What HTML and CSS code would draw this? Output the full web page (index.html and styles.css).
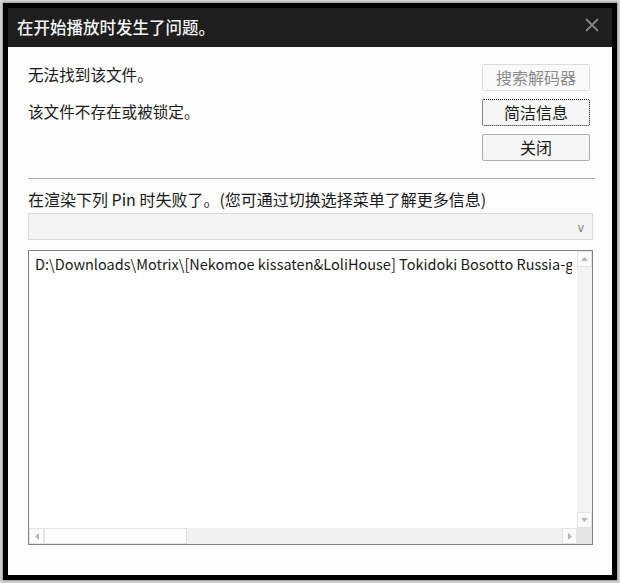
FILE: index.html
```html
<!DOCTYPE html>
<html lang="zh-CN">
<head>
<meta charset="utf-8">
<title>在开始播放时发生了问题。</title>
<link rel="stylesheet" href="styles.css">
</head>
<body>
<div class="window">
  <div class="titlebar">
    <span class="title">在开始播放时发生了问题。</span>
    <svg class="close" width="14" height="14" viewBox="0 0 14 14"><path d="M1 1L13 13M13 1L1 13" stroke="#858585" stroke-width="1.8" fill="none"/></svg>
  </div>
  <div class="content">
    <div class="top">
      <div class="messages">
        <p class="msg">无法找到该文件。</p>
        <p class="msg msg2">该文件不存在或被锁定。</p>
      </div>
      <div class="buttons">
        <div class="btn disabled">搜索解码器</div>
        <div class="btn focused">简洁信息</div>
        <div class="btn">关闭</div>
      </div>
    </div>
    <div class="sep"></div>
    <p class="label">在渲染下列 Pin 时失败了。(您可通过切换选择菜单了解更多信息)</p>
    <div class="combo"><span class="arrow">v</span></div>
    <div class="textbox">
      <div class="textarea">D:\Downloads\Motrix\[Nekomoe kissaten&amp;LoliHouse] Tokidoki Bosotto Russia-go de Dereru Tonari no Alya-san</div>
      <div class="vscroll">
        <div class="sbtn up"><svg width="7" height="4" viewBox="0 0 7 4"><path d="M0 4L3.5 0L7 4Z" fill="#b5b5b5"/></svg></div>
        <div class="vtrack"></div>
        <div class="sbtn down"><svg width="7" height="4" viewBox="0 0 7 4"><path d="M0 0L3.5 4L7 0Z" fill="#b5b5b5"/></svg></div>
      </div>
      <div class="hscroll">
        <div class="sbtn left"><svg width="4" height="7" viewBox="0 0 4 7"><path d="M4 0L0 3.5L4 7Z" fill="#b5b5b5"/></svg></div>
        <div class="hthumb"></div>
        <div class="htrack"></div>
        <div class="sbtn right"><svg width="4" height="7" viewBox="0 0 4 7"><path d="M0 0L4 3.5L0 7Z" fill="#b5b5b5"/></svg></div>
      </div>
      <div class="corner"></div>
    </div>
  </div>
</div>
</body>
</html>
```
FILE: styles.css
```css
html, body {
  margin: 0;
  padding: 0;
}
body {
  width: 620px;
  height: 583px;
  background: #d6d6d6;
  font-family: "Noto Sans CJK SC", "Noto Sans", sans-serif;
  overflow: hidden;
}
.window {
  margin: 3px 0 0 3px;
  width: 604px;
  height: 567px;
  border: 5px solid #000;
  background: #fcfcfc;
  display: flex;
  flex-direction: column;
  box-shadow: 0 0 2px 1px #9a9a9a;
}
.titlebar {
  height: 39px;
  flex: none;
  background: #1e1e1e;
  display: flex;
  align-items: center;
  justify-content: space-between;
  padding: 0 13px 0 9px;
}
.title {
  color: #f4f4f4;
  font-size: 16.5px;
  font-weight: 500;
  line-height: 20px;
  margin-top: -1px;
}
.close {
  display: block;
  margin-top: -6px;
}
.content {
  flex: 1;
  display: flex;
  flex-direction: column;
  padding: 17px 19px 0 20px;
}
.top {
  display: flex;
  justify-content: space-between;
}
.messages {
  display: flex;
  flex-direction: column;
}
.msg {
  margin: 0;
  font-size: 15.6px;
  line-height: 20px;
  color: #1a1a1a;
}
.msg2 {
  margin-top: 17px;
}
.buttons {
  width: 108px;
  margin-right: 3px;
  display: flex;
  flex-direction: column;
  gap: 8px;
}
.btn {
  box-sizing: border-box;
  height: 27px;
  border: 1px solid #adadad;
  border-radius: 2px;
  background: #f6f6f6;
  font-size: 16px;
  line-height: 25px;
  text-align: center;
  color: #1a1a1a;
}
.btn.disabled {
  border-color: #dcdcdc;
  color: #8a8a8a;
  background: #fafafa;
}
.btn.focused {
  border: 1px dotted #111;
}
.sep {
  height: 1px;
  background: #a9a9a9;
  margin-top: 17px;
  margin-right: -2px;
}
.label {
  margin: 10px 0 0;
  font-size: 16px;
  line-height: 20px;
  color: #1a1a1a;
}
.combo {
  box-sizing: border-box;
  height: 27px;
  margin-top: 4px;
  border: 1px solid #dadada;
  background: #f4f4f4;
  display: flex;
  align-items: center;
  justify-content: flex-end;
  padding-right: 8px;
}
.arrow {
  font-size: 12px;
  color: #777;
  line-height: 14px;
}
.textbox {
  box-sizing: border-box;
  height: 295px;
  margin-top: 10px;
  border: 1px solid #828282;
  background: #fff;
  display: grid;
  grid-template-columns: 1fr 15px;
  grid-template-rows: 1fr 16px;
}
.textarea {
  padding: 3px 0 0 6px;
  margin-right: 5px;
  font-size: 14.5px;
  line-height: 20px;
  color: #1a1a1a;
  white-space: nowrap;
  overflow: hidden;
  min-width: 0;
}
.vscroll {
  display: flex;
  flex-direction: column;
  background: #f3f3f3;
}
.vtrack {
  flex: 1;
}
.sbtn {
  box-sizing: border-box;
  width: 15px;
  height: 16px;
  border: 1px solid #e4e4e4;
  background: #fbfbfb;
  display: flex;
  align-items: center;
  justify-content: center;
  flex: none;
}
.hscroll {
  display: flex;
  background: #f0f0f0;
}
.hthumb {
  box-sizing: border-box;
  width: 143px;
  border: 1px solid #e0e0e0;
  background: #fdfdfd;
}
.htrack {
  flex: 1;
}
.corner {
  background: #e6e6e6;
}
```
